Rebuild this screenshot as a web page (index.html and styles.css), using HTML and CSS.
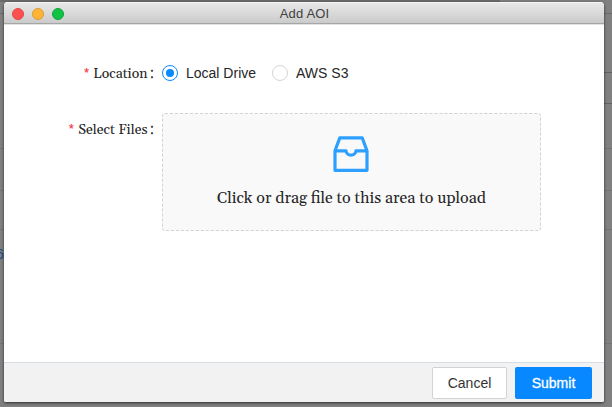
FILE: index.html
```html
<!DOCTYPE html>
<html lang="en">
<head>
<meta charset="utf-8">
<title>Add AOI</title>
<link rel="stylesheet" href="styles.css">
</head>
<body>
<div class="backdrop"><span class="row-id">6</span><i class="tick t1"></i><i class="tick t2"></i><i class="tick t3"></i><i class="tick t4"></i><i class="tick t5"></i><i class="tick t6"></i><i class="tick t7"></i></div>
<main class="window">
  <header class="titlebar">
    <div class="controls"><i class="dot red"></i><i class="dot amber"></i><i class="dot green"></i></div>
    <h1><span>Add AOI</span></h1>
  </header>
  <form class="form">
    <div class="field location">
      <div class="label"><span class="star">*</span><span class="name">Location</span><span class="colon">:</span></div>
      <div class="options">
        <span class="radio checked"></span><span class="option-text">Local Drive</span>
        <span class="radio second"></span><span class="option-text">AWS S3</span>
      </div>
    </div>
    <div class="field">
      <div class="label"><span class="star">*</span><span class="name">Select Files</span><span class="colon">:</span></div>
      <div class="dropzone">
        <svg class="inbox" viewBox="0 0 36 36" fill="none" stroke="#2c9fff" stroke-width="3.2" stroke-linejoin="round"><path d="M2 14.7 6.8 1.9H29.2L34 14.7V34.3H2Z"/><path d="M2 14.9H13C13.5 20.6 22.5 20.6 23 14.9H34"/></svg>
        <p>Click or drag file to this area to upload</p>
      </div>
    </div>
  </form>
  <footer class="footer">
    <button class="cancel">Cancel</button>
    <button class="submit">Submit</button>
  </footer>
</main>
</body>
</html>
```

FILE: styles.css
```css
* { box-sizing: border-box; }
body { margin: 0; width: 612px; height: 407px; overflow: hidden; background: #808080; font: 14px "Liberation Sans", Arial, sans-serif; color: #262626; padding: 2px 8px 5px 4px; }
.backdrop { position: absolute; inset: 0; overflow: hidden; }
.backdrop::before { content: ""; position: absolute; left: 0; top: 0; width: 500px; height: 2px; background: #6b6b6b; }
.row-id { position: absolute; left: -4px; top: 246px; color: #164f8b; line-height: 16px; }
.tick { position: absolute; left: 0; right: 0; height: 1px; background: #747474; }
.t1 { top: 13px; background: #696969; }
.t2 { top: 72px; left: 604px; background: #626262; }
.t3 { top: 103px; left: 604px; background: #626262; }
.t4 { top: 148px; }
.t5 { top: 190px; }
.t6 { top: 229px; }
.t7 { top: 343px; }
.window { position: relative; width: 600px; height: 400px; display: flex; flex-direction: column; background: #fff; border-radius: 4px 4px 2px 2px; overflow: hidden; box-shadow: 0 1px 3px rgba(0,0,0,.65); }
.titlebar { height: 22px; flex: none; display: grid; grid-template-columns: 80px 1fr 80px; align-items: center; background: linear-gradient(#e9e9e9, #cbcbcb); border-bottom: 1px solid #a4a6a8; box-shadow: inset 0 1px #f5f5f5, 0 1px #e2e2e2; }
.controls { display: flex; gap: 8px; padding: 2px 0 0 8px; }
.dot { width: 12px; height: 12px; border-radius: 50%; border: 1px solid; }
.red { background: #ff5050; border-color: #dc4848; }
.amber { background: #ffb435; border-color: #db9b35; }
.green { background: #0fc344; border-color: #13a23d; }
h1 { margin: 0; text-align: center; font: 13px/18px "Liberation Sans", sans-serif; color: #404040; padding: 2px 0 0 1px; letter-spacing: .15px; }
.form { flex: 1; padding-top: 41px; }
.field { display: grid; grid-template-columns: 158px 1fr; }
.location { height: 48px; align-items: start; }
.label { display: flex; justify-content: flex-end; height: 32px; line-height: 32px; padding: 0 8px 0 0; }
.location .label { margin-top: -8px; }
.star { color: #f5333f; font: 12px/32px "Liberation Sans", sans-serif; margin-right: 4.5px; -webkit-text-stroke: .2px; }
.name { font-family: Georgia, Gelasio, "Liberation Serif", serif; line-height: 34px; white-space: nowrap; }
.colon { width: 4px; margin-left: 2.5px; -webkit-text-stroke: .3px; }
.options { display: flex; align-items: center; height: 16px; }
.radio { width: 16px; height: 16px; flex: none; border: 1px solid #d5d5d5; border-radius: 50%; display: grid; place-items: center; }
.checked { border-color: #078aff; }
.checked::after { content: ""; width: 8px; height: 8px; border-radius: 50%; background: #078aff; }
.option-text { margin-left: 8px; }
.second { margin-left: 16px; }
.dropzone { width: 379px; height: 118px; background: #f9f9f9; border: 1px dashed #d2d2d2; border-radius: 3px; display: flex; flex-direction: column; align-items: center; padding-top: 22px; }
.inbox { width: 36px; height: 36px; margin-right: 1px; }
.dropzone p { margin: 14px 0 0; font: 16px/24px Georgia, Gelasio, "Liberation Serif", serif; white-space: nowrap; }
.footer { height: 40px; flex: none; display: flex; justify-content: flex-end; gap: 8px; padding: 4px 12px 0 0; background: #f2f2f2; border-top: 1px solid #d5dce3; }
button { height: 32px; border-radius: 2px; padding: 0; font: 14px "Liberation Sans", sans-serif; }
.cancel { width: 75px; background: #fff; border: 1px solid #d3d3d3; color: #333; }
.submit { width: 77px; background: #0788ff; border: 0; color: #fff; -webkit-text-stroke: .3px #fff; }
```
